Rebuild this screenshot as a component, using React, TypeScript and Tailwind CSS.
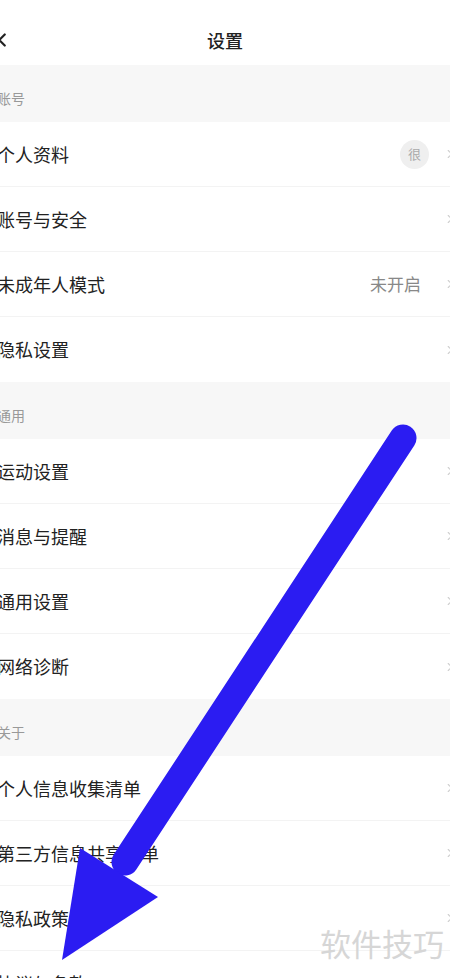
import { ChevronLeft, ChevronRight } from 'lucide-react';

type Row = { label: string; value?: string; badge?: string };

const sections: { title: string; rows: Row[] }[] = [
  {
    title: '账号',
    rows: [
      { label: '个人资料', badge: '很' },
      { label: '账号与安全' },
      { label: '未成年人模式', value: '未开启' },
      { label: '隐私设置' },
    ],
  },
  {
    title: '通用',
    rows: [
      { label: '运动设置' },
      { label: '消息与提醒' },
      { label: '通用设置' },
      { label: '网络诊断' },
    ],
  },
  {
    title: '关于',
    rows: [
      { label: '个人信息收集清单' },
      { label: '第三方信息共享清单' },
      { label: '隐私政策' },
      { label: '协议与条款' },
    ],
  },
];

export default function App() {
  return (
    <div
      className="relative w-[450px] h-[978px] overflow-hidden bg-white"
      style={{ fontFamily: '"Noto Sans CJK SC", "Noto Sans", sans-serif' }}
    >
      {/* 顶部导航栏 */}
      <div className="relative h-[65px] flex items-start justify-center pt-[27px]">
        <ChevronLeft className="absolute left-[-9px] top-[29px] w-[22px] h-[22px] text-[#222]" strokeWidth={2.4} />
        <h1 className="text-[18px] leading-[27px] font-medium text-[#222]">设置</h1>
      </div>

      {/* 设置列表 */}
      {sections.map((section) => (
        <div key={section.title}>
          <div className="h-[57px] bg-[#f7f7f7] pt-[24px]">
            <span className="block ml-[-3px] text-[14px] leading-[18px] text-[#999]">{section.title}</span>
          </div>
          {section.rows.map((row, i) => (
            <div
              key={row.label}
              className={`h-[65px] flex items-center ${i < section.rows.length - 1 ? 'border-b border-[#f3f3f3]' : ''}`}
            >
              <span className="ml-[-3px] text-[18px] text-[#222] whitespace-nowrap">{row.label}</span>
              <div className="ml-auto flex items-center mr-[-7px]">
                {row.badge && (
                  <span className="w-[29px] h-[29px] rounded-full bg-[#efefef] flex items-center justify-center text-[13px] text-[#aaa] mr-[14px]">
                    {row.badge}
                  </span>
                )}
                {row.value && <span className="text-[17px] text-[#888] mr-[22px]">{row.value}</span>}
                <ChevronRight className="w-[14px] h-[14px] text-[#cfcfcf]" strokeWidth={2} />
              </div>
            </div>
          ))}
        </div>
      ))}

      {/* 水印 */}
      <div className="absolute left-[320px] top-[923px] text-[31px] leading-[40px] text-[#d6d6d6] whitespace-nowrap">
        软件技巧
      </div>

      {/* 标注箭头 */}
      <svg className="absolute inset-0 pointer-events-none" width="450" height="978" viewBox="0 0 450 978">
        <line x1="403" y1="438" x2="125" y2="862" stroke="#2b1cf2" strokeWidth="27" strokeLinecap="round" />
        <polygon points="80,848 158,897 62,960" fill="#2b1cf2" />
      </svg>
    </div>
  );
}
